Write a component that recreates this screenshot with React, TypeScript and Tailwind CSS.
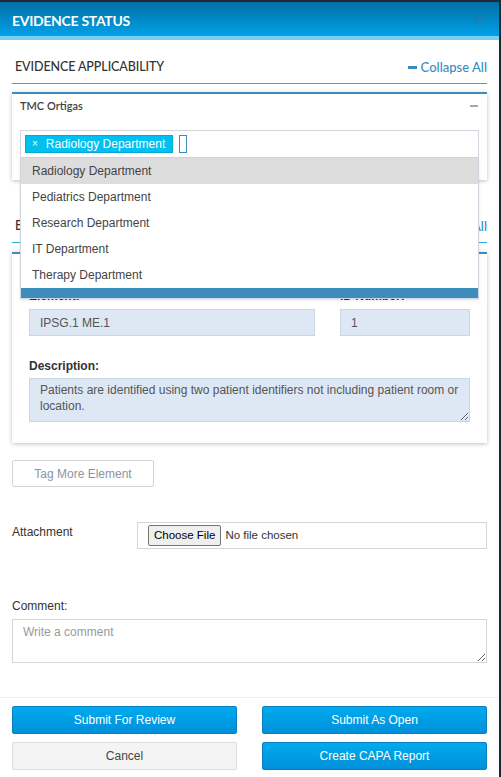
const departments = [
  'Radiology Department',
  'Pediatrics Department',
  'Research Department',
  'IT Department',
  'Therapy Department',
];

function SectionHeading({ title }: { title: string }) {
  return (
    <div className="flex items-center justify-between border-b border-[#29abe2] pb-[6px] pl-[3px]">
      <span className="font-['Lato',sans-serif] text-[12.5px] leading-[20px] font-medium text-[#333] uppercase tracking-[-0.1px]">
        {title}
      </span>
      <span className="flex items-center gap-[4px] font-['Lato',sans-serif] text-[13px] leading-[20px] font-medium text-[#3a8cc0]">
        <span className="block w-[9px] h-[3px] bg-[#3a8cc0]" />
        Collapse All
      </span>
    </div>
  );
}

function DepartmentSelect() {
  return (
    <div className="relative">
      <div className="flex items-center gap-[6px] h-[28px] border border-[#d2d6de] px-[4px]">
        <span className="flex items-center gap-[8px] h-[18px] bg-[#00c0ef] border border-[#00acd6] pl-[6px] pr-[7px] text-white text-[12px] leading-none">
          <span className="text-[10px]">×</span>
          Radiology Department
        </span>
        <span className="block w-[8px] h-[18px] border border-[#3c8dbc]" />
      </div>
      <ul className="absolute left-0 right-0 top-[28px] z-10 bg-white border border-[#d2d6de] border-t-0 shadow-sm">
        {departments.map((d, i) => (
          <li
            key={d}
            className={`h-[26px] flex items-center pl-[11px] text-[12px] text-[#444] ${i === 0 ? 'bg-[#dddddd]' : ''}`}
          >
            {d}
          </li>
        ))}
        <li className="h-[10px] bg-[#3c8dbc]" />
      </ul>
    </div>
  );
}

export default function App() {
  return (
    <div className="min-h-screen bg-[#1b2a33] pt-[2px] font-['Liberation_Sans',Arial,sans-serif]">
      <div className="w-[499px] bg-white">
        <div className="flex items-center justify-between h-[34px] px-[12px] pt-[3px] bg-gradient-to-b from-[#006fa6] to-[#02a2e6]">
          <h1 className="font-['Lato',sans-serif] text-[14px] font-bold text-white tracking-[-0.3px]">EVIDENCE STATUS</h1>
          <span className="text-[17px] leading-none text-[#2d7aa6] mr-[3px]">×</span>
        </div>
        <div className="h-[4px] bg-[#7ccbf0]" />

        <div className="px-[12px] pt-[17px]">
          <SectionHeading title="Evidence Applicability" />

          <div className="mt-[8px] border-t-2 border-[#3c8dbc] bg-white shadow-[0_1px_4px_rgba(0,0,0,0.25)] px-[8px] pt-[4px] pb-[22px] relative z-10">
            <div className="flex items-center justify-between h-[16px]">
              <span className="font-['Lato',sans-serif] text-[11px] font-semibold text-[#444]">TMC Ortigas</span>
              <span className="block w-[8px] h-[2px] bg-[#a0a8b4] mr-[1px]" />
            </div>
            <div className="mt-[16px]">
              <DepartmentSelect />
            </div>
          </div>

          <div className="mt-[36px]">
            <SectionHeading title="Element Applicability" />
          </div>

          <div className="mt-[9px] border-t-2 border-[#3c8dbc] bg-white shadow-[0_1px_4px_rgba(0,0,0,0.25)] px-[17px] pt-[10px] pb-[21px]">
            <div className="flex items-center justify-between h-[16px] mb-[8px]">
              <span className="font-['Lato',sans-serif] text-[11px] font-semibold text-[#444]">IPSG.1</span>
              <span className="block w-[8px] h-[2px] bg-[#a0a8b4]" />
            </div>
            <div className="flex gap-[25px]">
              <div className="w-[286px]">
                <div className="text-[12px] leading-[16px] font-bold text-[#333] mb-[5px]">Element:</div>
                <div className="h-[27px] flex items-center px-[10px] bg-[#dde8f4] border border-[#c9d6e3] text-[12px] text-[#555]">
                  IPSG.1 ME.1
                </div>
              </div>
              <div className="w-[130px]">
                <div className="text-[12px] leading-[16px] font-bold text-[#333] mb-[5px]">ID Number:</div>
                <div className="h-[27px] flex items-center px-[10px] bg-[#dde8f4] border border-[#c9d6e3] text-[12px] text-[#555]">
                  1
                </div>
              </div>
            </div>
            <div className="mt-[22px] text-[12px] leading-[16px] font-bold text-[#333]">Description:</div>
            <textarea
              readOnly
              className="mt-[4px] block w-full h-[44px] px-[10px] py-[3px] bg-[#dde8f4] border border-[#c9d6e3] text-[12px] leading-[16px] text-[#555] outline-none"
              value="Patients are identified using two patient identifiers not including patient room or location."
            />
          </div>

          <button className="mt-[17px] w-[142px] h-[27px] border border-[#cfd4da] rounded-[2px] text-[12px] text-[#8a96a3] bg-white">
            Tag More Element
          </button>

          <div className="mt-[35px] flex">
            <label className="w-[125px] pt-[1px] text-[12px] text-[#333]">Attachment</label>
            <div className="flex-1 h-[27px] flex items-center border border-[#d2d6de] px-[10px]">
              <input type="file" className="text-[11.5px] text-[#333] file:mr-[4px] file:px-[5px] file:py-[1px] file:border file:border-[#767676] file:rounded-[2px] file:bg-[#efefef] file:text-[11.5px] file:text-black" />
            </div>
          </div>

          <div className="mt-[49px] text-[12px] leading-[16px] text-[#333]">Comment:</div>
          <textarea
            placeholder="Write a comment"
            className="mt-[5px] block w-full h-[44px] px-[10px] py-[4px] border border-[#d2d6de] text-[12px] leading-[16px] text-[#333] placeholder:text-[#999] outline-none"
          />
        </div>

        <div className="mt-[34px] border-t border-[#eeeeee] px-[12px] pt-[8px] pb-[8px] grid grid-cols-2 gap-x-[25px] gap-y-[8px]">
          <button className="h-[28px] rounded-[2px] border border-[#0680bf] bg-gradient-to-b from-[#00aaef] to-[#0090d9] text-white text-[12px]">
            Submit For Review
          </button>
          <button className="h-[28px] rounded-[2px] border border-[#0680bf] bg-gradient-to-b from-[#00aaef] to-[#0090d9] text-white text-[12px]">
            Submit As Open
          </button>
          <button className="h-[28px] rounded-[2px] border border-[#dddddd] bg-[#f4f4f4] text-[#444] text-[12px]">
            Cancel
          </button>
          <button className="h-[28px] rounded-[2px] border border-[#0680bf] bg-gradient-to-b from-[#00aaef] to-[#0090d9] text-white text-[12px]">
            Create CAPA Report
          </button>
        </div>
      </div>
    </div>
  );
}
